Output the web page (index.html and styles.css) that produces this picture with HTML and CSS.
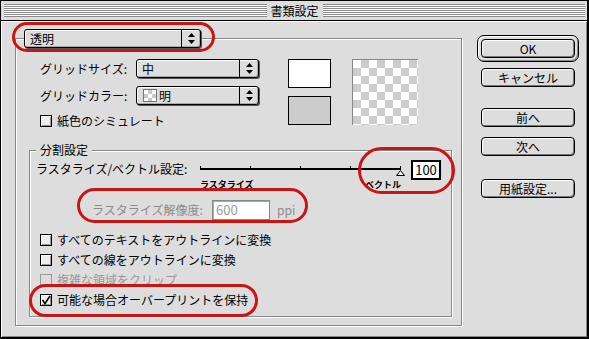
FILE: index.html
```html
<!DOCTYPE html>
<html lang="ja">
<head>
    <meta charset="UTF-8">
    <title>書類設定</title>
    <link rel="stylesheet" href="styles.css">
</head>
<body>
    <div class="window">
        <div class="titlebar">
            <span class="stripes"></span>
            <span class="title">書類設定</span>
            <span class="stripes"></span>
        </div>

        <div class="dialog-body">
            <div class="group outer">
                <div class="popup legend-popup">
                    <span class="popup-text">透明</span>
                    <span class="popup-arrows">
                        <svg width="7" height="11" viewBox="0 0 7 11"><path d="M3.5 0L7 4H0z M0 7h7L3.5 11z" fill="#000"/></svg>
                    </span>
                </div>

                <div class="top-section">
                    <div class="grid-fields">
                        <div class="field">
                            <span class="field-label">グリッドサイズ:</span>
                            <div class="popup grid-popup">
                                <span class="popup-text">中</span>
                                <span class="popup-arrows">
                                    <svg width="7" height="11" viewBox="0 0 7 11"><path d="M3.5 0L7 4H0z M0 7h7L3.5 11z" fill="#000"/></svg>
                                </span>
                            </div>
                        </div>
                        <div class="field field-color">
                            <span class="field-label">グリッドカラー:</span>
                            <div class="popup grid-popup">
                                <span class="mini-checker"></span>
                                <span class="popup-text color-text">明</span>
                                <span class="popup-arrows">
                                    <svg width="7" height="11" viewBox="0 0 7 11"><path d="M3.5 0L7 4H0z M0 7h7L3.5 11z" fill="#000"/></svg>
                                </span>
                            </div>
                        </div>
                        <div class="check check-paper">
                            <span class="box"></span>紙色のシミュレート
                        </div>
                    </div>

                    <div class="swatches">
                        <div class="swatch swatch-white"></div>
                        <div class="swatch swatch-gray"></div>
                    </div>

                    <div class="checker"></div>
                </div>

                <div class="group inner">
                    <div class="legend">分割設定</div>

                    <div class="slider-row">
                        <span class="slider-label">ラスタライズ/ベクトル設定:</span>
                        <div class="slider">
                            <svg width="210" height="16" viewBox="0 0 210 16">
                                <rect x="2" y="8" width="201" height="2" fill="#000"/>
                                <rect x="2" y="6" width="1" height="2" fill="#000"/>
                                <rect x="52" y="6" width="1" height="2" fill="#000"/>
                                <rect x="102" y="6" width="1" height="2" fill="#000"/>
                                <rect x="152" y="6" width="1" height="2" fill="#000"/>
                                <rect x="202" y="6" width="1" height="2" fill="#000"/>
                                <path d="M202.5 10.5L206.5 15.5H198.5z" fill="#fff" stroke="#000" stroke-width="1"/>
                            </svg>
                            <div class="slider-ends">
                                <span>ラスタライズ</span>
                                <span>ベクトル</span>
                            </div>
                        </div>
                        <div class="num-box">100</div>
                    </div>

                    <div class="res-row">
                        <span class="res-label">ラスタライズ解像度:</span>
                        <div class="res-box">600</div>
                        <span class="res-unit">ppi</span>
                    </div>

                    <div class="checks">
                        <div class="check"><span class="box"></span>すべてのテキストをアウトラインに変換</div>
                        <div class="check"><span class="box"></span>すべての線をアウトラインに変換</div>
                        <div class="check disabled"><span class="box"></span>複雑な領域をクリップ</div>
                        <div class="check">
                            <span class="box">
                                <svg width="10" height="10" viewBox="0 0 10 10"><path d="M1.5 5l2.5 3.5L9 1" fill="none" stroke="#000" stroke-width="1.6"/></svg>
                            </span>可能な場合オーバープリントを保持
                        </div>
                    </div>
                </div>
            </div>

            <div class="buttons">
                <div class="default-ring">
                    <button class="btn">OK</button>
                </div>
                <button class="btn btn-cancel">キャンセル</button>
                <button class="btn btn-prev">前へ</button>
                <button class="btn btn-next">次へ</button>
                <button class="btn btn-page">用紙設定...</button>
            </div>
        </div>

        <span class="mark mark-mode"></span>
        <span class="mark mark-slider"></span>
        <span class="mark mark-res"></span>
        <span class="mark mark-over"></span>
    </div>
</body>
</html>
```

FILE: styles.css
```css
body {
    margin: 0;
    padding: 0;
    background-color: #dddddd;
}

.window {
    position: relative;
    width: 589px;
    height: 339px;
    box-sizing: border-box;
    border-style: solid;
    border-color: #000;
    border-width: 1px 2px 2px 1px;
    background-color: #dddddd;
    font-family: "Noto Sans CJK JP", "Liberation Sans", sans-serif;
    font-size: 12px;
    line-height: 14px;
    color: #000;
}

/* title bar */
.titlebar {
    display: flex;
    align-items: center;
    height: 19px;
    padding: 0 2px 0 3px;
    border-bottom: 1px solid #000;
}

.stripes {
    flex: 1;
    height: 13px;
    background: repeating-linear-gradient(to bottom, #8a8a8a 0 1px, #ffffff 1px 2px);
}

.title {
    padding: 0 4px;
}

/* body */
.dialog-body {
    display: flex;
    height: 316px;
    box-sizing: border-box;
    padding: 14px 0 0 14px;
    box-shadow: inset 1px 1px 0 #fff, inset -1px -1px 0 #888;
}

.group {
    box-sizing: border-box;
    border: 1px solid #888;
    box-shadow: 1px 1px 0 #fff, inset 1px 1px 0 #fff;
}

.group.outer {
    width: 447px;
    height: 288px;
    margin-top: 3px;
}

/* popup menus */
.popup {
    display: flex;
    align-items: center;
    box-sizing: border-box;
    height: 19px;
    border: 1px solid #000;
    border-radius: 3px;
    background-color: #dddddd;
    box-shadow: 1px 1px 0 #555, inset 1px 1px 0 #fff, inset -1px -1px 0 #aaa;
}

.popup-text {
    flex: 1;
    padding-left: 5px;
    line-height: 17px;
}

.popup-arrows {
    display: flex;
    align-items: center;
    justify-content: center;
    width: 19px;
    height: 17px;
    box-sizing: border-box;
    border-left: 1px solid #000;
}

.legend-popup {
    width: 177px;
    margin: -10px 0 0 8px;
}

.top-section {
    display: flex;
    margin-top: 11px;
    padding-left: 24px;
}

.grid-fields {
    width: 219px;
}

.field {
    display: flex;
    align-items: center;
    height: 19px;
}

.field-color {
    margin-top: 8px;
}

.field-label {
    width: 96px;
}

.grid-popup {
    width: 123px;
}

.mini-checker {
    width: 14px;
    height: 13px;
    box-sizing: border-box;
    margin-left: 6px;
    border: 1px solid #777;
    background: repeating-conic-gradient(#c8c8c8 0 25%, #fff 0 50%) 0 0 / 8px 8px;
}

.color-text {
    padding-left: 2px;
}

/* checkboxes */
.check {
    display: flex;
    align-items: center;
    height: 12px;
    line-height: 12px;
}

.check-paper {
    margin-top: 10px;
}

.box {
    display: flex;
    align-items: center;
    justify-content: center;
    width: 12px;
    height: 12px;
    box-sizing: border-box;
    margin-right: 5px;
    border: 1px solid #000;
    background-color: #eeeeee;
    box-shadow: inset 1px 1px 0 #fff, inset -1px -1px 0 #999;
}

.check.disabled {
    color: #999;
}

.check.disabled .box {
    border-color: #999;
    box-shadow: none;
    background-color: #dddddd;
}

/* swatches */
.swatches {
    display: flex;
    flex-direction: column;
    gap: 8px;
    margin-left: 29px;
}

.swatch {
    width: 43px;
    height: 29px;
    box-sizing: border-box;
    border: 1px solid #000;
}

.swatch-white {
    background-color: #fff;
}

.swatch-gray {
    background-color: #cccccc;
}

.checker {
    width: 66px;
    height: 66px;
    box-sizing: border-box;
    margin-left: 21px;
    border-top: 1px solid #888;
    border-left: 1px solid #888;
    background: repeating-conic-gradient(#cccccc 0 25%, #fff 0 50%) 0 0 / 16px 16px;
}

/* inner group */
.group.inner {
    width: 423px;
    height: 167px;
    margin: 23px 0 0 13px;
}

.legend {
    width: fit-content;
    margin: -8px 0 0 6px;
    padding: 0 4px;
    background-color: #dddddd;
    line-height: 14px;
}

.slider-row {
    display: flex;
    align-items: flex-start;
    height: 34px;
    margin-top: 3px;
    padding-left: 6px;
}

.slider-label {
    width: 162px;
    line-height: 18px;
}

.slider svg {
    display: block;
}

.slider-ends {
    display: flex;
    justify-content: space-between;
    margin-top: 3px;
    padding: 0 7px 0 2px;
    font-size: 9px;
    line-height: 11px;
    font-weight: bold;
}

.num-box {
    width: 30px;
    height: 20px;
    box-sizing: border-box;
    margin-left: 3px;
    border: 2px solid #000;
    background-color: #fff;
    font-size: 13px;
    line-height: 16px;
    text-align: center;
}

.res-row {
    display: flex;
    align-items: center;
    height: 20px;
    margin-top: 6px;
    padding-left: 62px;
    color: #8c8c8c;
}

.res-label {
    width: 120px;
}

.res-box {
    width: 58px;
    height: 20px;
    box-sizing: border-box;
    padding-left: 3px;
    border: 1px solid #888;
    box-shadow: inset 1px 1px 0 #aaa;
    background-color: #fff;
    font-size: 13px;
    line-height: 18px;
    color: #999;
}

.res-unit {
    margin-left: 7px;
}

.checks {
    display: flex;
    flex-direction: column;
    gap: 8px;
    margin: 14px 0 0 10px;
}

/* buttons */
.buttons {
    display: flex;
    flex-direction: column;
    width: 102px;
    margin-left: 15px;
}

.default-ring {
    padding: 3px;
    border: 1px solid #000;
    border-radius: 7px;
    box-shadow: inset 1px 1px 0 #fff, inset -1px -1px 0 #888;
}

.btn {
    display: block;
    width: 94px;
    height: 19px;
    box-sizing: border-box;
    margin: 0;
    padding: 0;
    border: 1px solid #000;
    border-radius: 4px;
    background-color: #dddddd;
    box-shadow: inset 1px 1px 0 #fff, inset -1px -1px 0 #777;
    font-family: "Noto Sans CJK JP", "Liberation Sans", sans-serif;
    font-size: 12px;
    line-height: 16px;
    color: #000;
    text-align: center;
}

.buttons > .btn {
    margin-left: 4px;
}

.btn-cancel {
    margin-top: 6px;
}

.btn-prev {
    margin-top: 21px;
}

.btn-next {
    margin-top: 10px;
}

.btn-page {
    margin-top: 23px;
}

/* red annotation marks */
.mark {
    position: absolute;
    box-sizing: border-box;
    border: 3px solid #cc1414;
}

.mark-mode {
    left: 11px;
    top: 21px;
    width: 203px;
    height: 30px;
    border-radius: 15px;
}

.mark-slider {
    left: 357px;
    top: 146px;
    width: 97px;
    height: 47px;
    border-radius: 24px;
}

.mark-res {
    left: 76px;
    top: 187px;
    width: 231px;
    height: 35px;
    border-radius: 18px;
}

.mark-over {
    left: 28px;
    top: 283px;
    width: 229px;
    height: 33px;
    border-radius: 17px;
}
```
